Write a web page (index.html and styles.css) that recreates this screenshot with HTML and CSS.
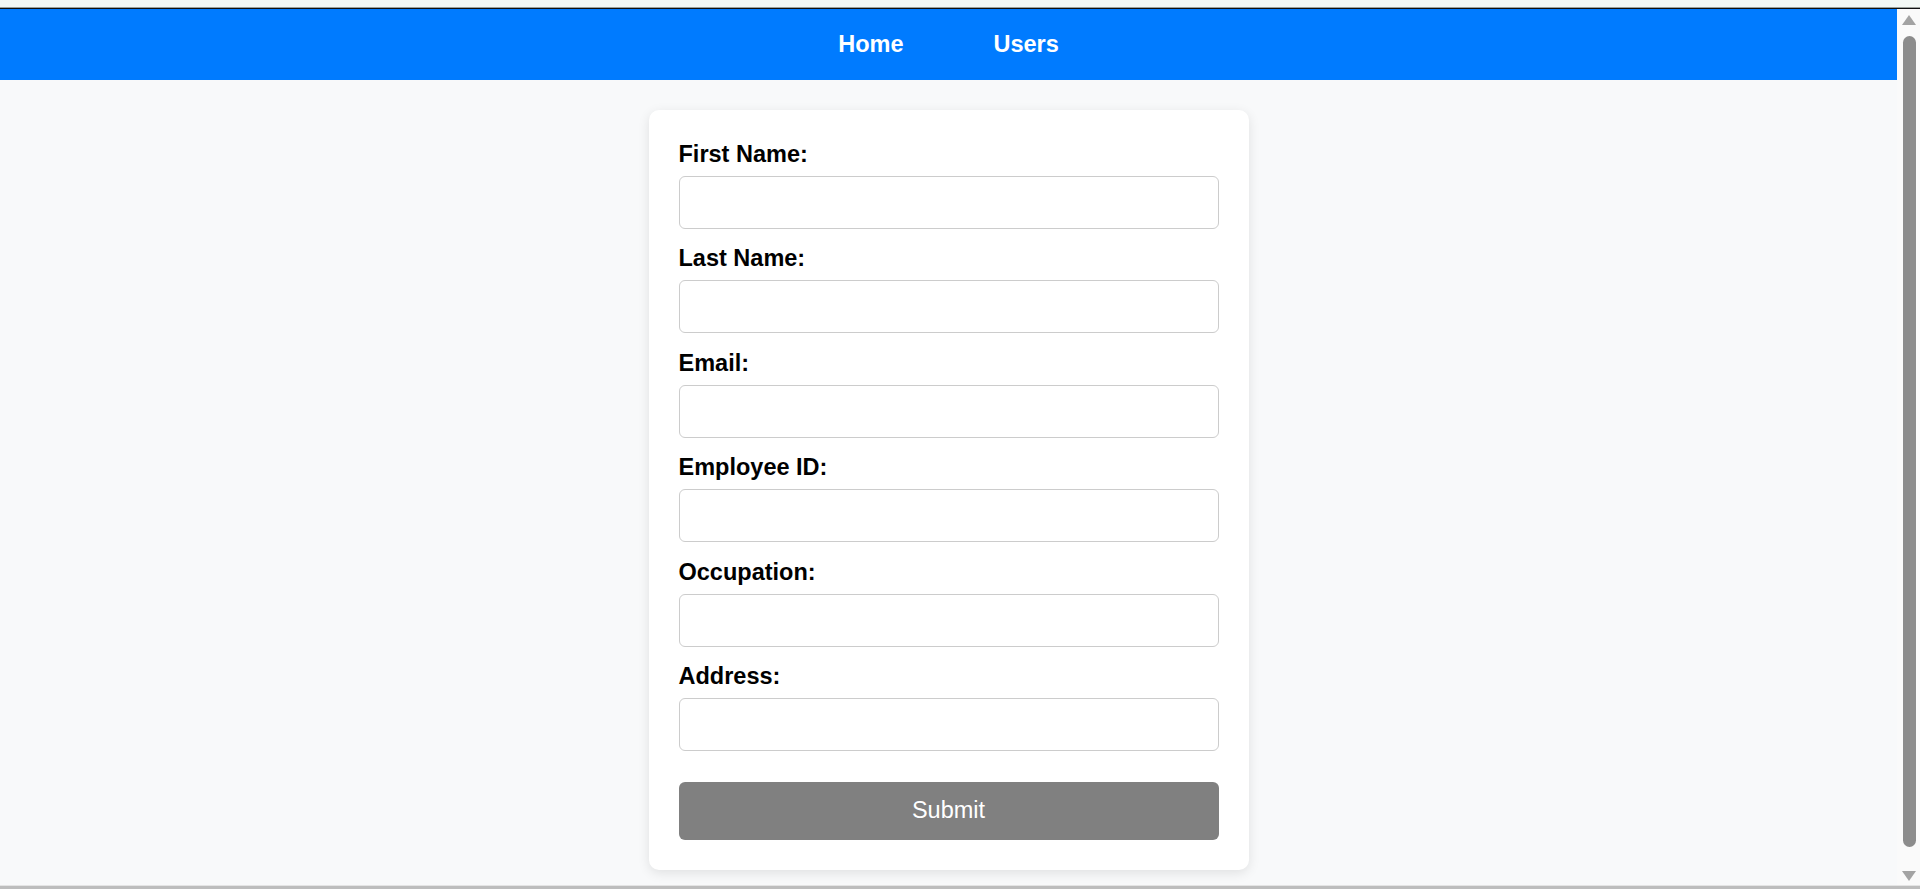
FILE: index.html
```html
<!DOCTYPE html>
<html lang="en">
<head>
<meta charset="utf-8">
<title>User Form</title>
<link rel="stylesheet" href="styles.css">
</head>
<body>
<div class="chrome-top"></div>
<div class="window">
  <div class="page">
    <nav class="navbar">
      <a class="nav-link" href="#">Home</a>
      <a class="nav-link" href="#">Users</a>
    </nav>
    <main class="main">
      <form class="card">
        <div class="field">
          <label class="label" for="first">First Name:</label>
          <input class="input" id="first" type="text">
        </div>
        <div class="field">
          <label class="label" for="last">Last Name:</label>
          <input class="input" id="last" type="text">
        </div>
        <div class="field">
          <label class="label" for="email">Email:</label>
          <input class="input" id="email" type="text">
        </div>
        <div class="field">
          <label class="label" for="emp">Employee ID:</label>
          <input class="input" id="emp" type="text">
        </div>
        <div class="field">
          <label class="label" for="occ">Occupation:</label>
          <input class="input" id="occ" type="text">
        </div>
        <div class="field">
          <label class="label" for="addr">Address:</label>
          <input class="input" id="addr" type="text">
        </div>
        <button class="submit" type="button">Submit</button>
      </form>
    </main>
  </div>
  <div class="scrollbar">
    <div class="arrow arrow-up"></div>
    <div class="thumb"></div>
    <div class="arrow arrow-down"></div>
  </div>
</div>
<div class="chrome-bottom"></div>
</body>
</html>
```

FILE: styles.css
```css
html, body {
  margin: 0;
  padding: 0;
  height: 889px;
  overflow: hidden;
}

body {
  font-family: "Liberation Sans", Arial, sans-serif;
  background: #f8f9fa;
  display: flex;
  flex-direction: column;
}

.chrome-top {
  height: 7px;
  background: #f3f8f5;
  border-bottom: 1px solid #9aa09c;
  box-shadow: 0 1px 0 #111;
  margin-bottom: 1px;
  flex: none;
}

.window {
  flex: 1;
  display: flex;
  min-height: 0;
}

.page {
  flex: 1;
  display: flex;
  flex-direction: column;
  background: #f8f9fa;
}

.navbar {
  height: 71px;
  background: #007bff;
  display: flex;
  justify-content: center;
  align-items: center;
  gap: 90px;
  flex: none;
}

.nav-link {
  color: #fff;
  font-weight: bold;
  font-size: 23.5px;
  text-decoration: none;
  padding-bottom: 1px;
}

.main {
  flex: 1;
  padding-top: 30px;
}

.card {
  width: 600px;
  box-sizing: border-box;
  margin: 0 auto;
  padding: 30px;
  background: #fff;
  border-radius: 10px;
  box-shadow: 0 3px 12px rgba(0, 0, 0, 0.1);
}

.field {
  margin-bottom: 15.4px;
}

.label {
  display: block;
  font-weight: bold;
  font-size: 23.5px;
  line-height: 28px;
  color: #000;
  margin-bottom: 8px;
}

.input {
  display: block;
  width: 100%;
  height: 53px;
  box-sizing: border-box;
  border: 1px solid #cccccc;
  border-radius: 6px;
  background: #fff;
  font-size: 20px;
  margin: 0;
}

.submit {
  display: block;
  width: 100%;
  height: 57.6px;
  margin-top: 31px;
  border: none;
  border-radius: 6px;
  background: #808080;
  color: #fff;
  font-family: "Liberation Sans", Arial, sans-serif;
  font-size: 23.5px;
  padding: 0;
}

.scrollbar {
  width: 23px;
  flex: none;
  background: #fafafa;
  display: flex;
  flex-direction: column;
  align-items: center;
  padding: 6px 0 4px 1px;
  box-sizing: border-box;
}

.arrow {
  width: 0;
  height: 0;
  border-left: 7.5px solid transparent;
  border-right: 7.5px solid transparent;
  flex: none;
}

.arrow-up {
  border-bottom: 10px solid #a3a3a3;
}

.arrow-down {
  border-top: 10px solid #a3a3a3;
}

.thumb {
  width: 13px;
  flex: 1;
  margin: 11px 0 24px;
  background: #8c8c8c;
  border-radius: 7px;
}

.chrome-bottom {
  height: 3px;
  flex: none;
  background: #bdbdbd;
  border-top: 1px solid #e4e4e4;
}
```
